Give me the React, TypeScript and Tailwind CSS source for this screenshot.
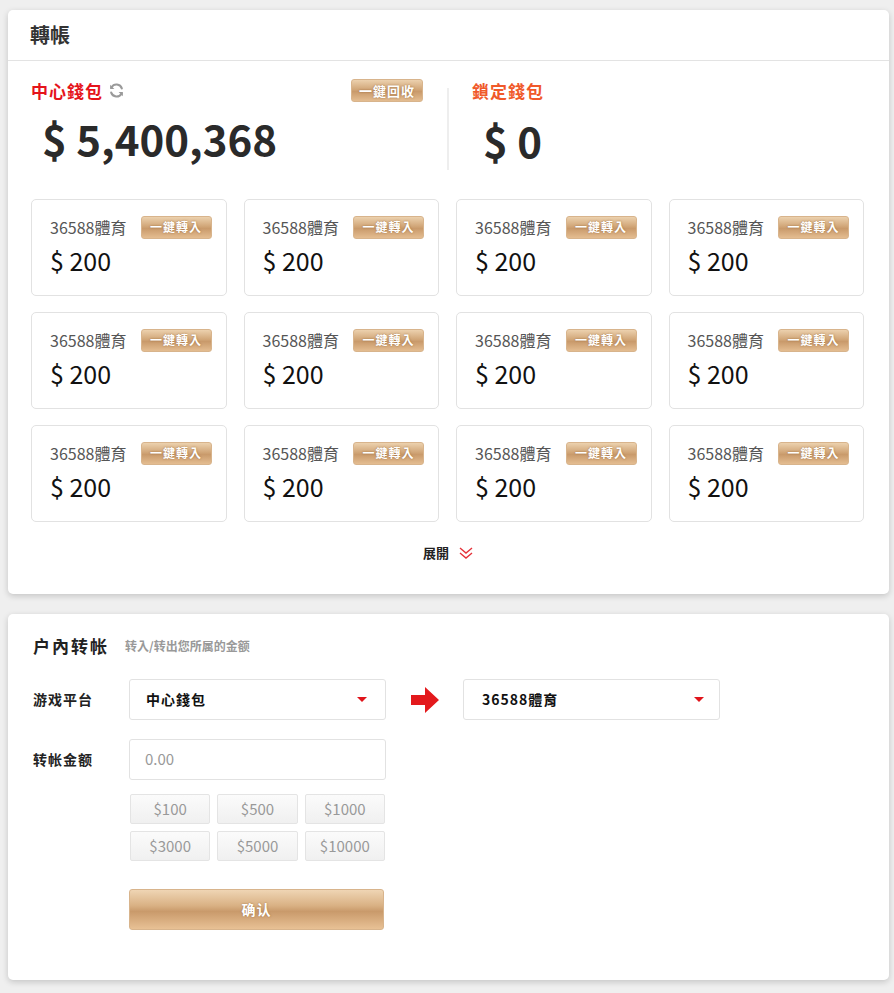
import React from "react";

const FONT = { fontFamily: '"Noto Sans CJK TC", "Noto Sans CJK SC", "Noto Sans", sans-serif' };

const goldBtn =
  "bg-[linear-gradient(to_bottom,#ecd1ae_0%,#d1a678_45%,#c99a6b_55%,#e4bd91_100%)] border border-[#d8b48c] text-white font-bold [text-shadow:0_0_2px_rgba(120,70,20,0.6)]";

function Card() {
  return (
    <div className="h-[97px] rounded-[5px] border border-[#e2e2e2] bg-white pl-[18px] pr-[14px] pt-[15px]">
      <div className="flex items-center justify-between">
        <span className="text-[16px] text-[#555] leading-[24px]">36588體育</span>
        <span className={`${goldBtn} flex h-[23px] w-[71px] items-center justify-center rounded-[3px] text-[12px] tracking-[1px]`}>
          一鍵轉入
        </span>
      </div>
      <div className="mt-[5px] text-[25px] leading-[32px] text-[#111]">$ 200</div>
    </div>
  );
}

function Caret() {
  return (
    <svg width="10" height="6" viewBox="0 0 10 6">
      <polygon points="0,0 10,0 5,5" fill="#e0141b" />
    </svg>
  );
}

export default function App() {
  const amounts = ["$100", "$500", "$1000", "$3000", "$5000", "$10000"];
  return (
    <div className="min-h-[993px] w-full bg-[#efefef] pt-[10px] pl-[8px] pr-[5px]" style={FONT}>
      {/* Panel 1 */}
      <div className="w-[881px] rounded-[5px] bg-white shadow-[0_2px_6px_rgba(0,0,0,0.18)]">
        <div className="flex h-[51px] items-center border-b border-[#e3e3e3] pl-[22px]">
          <span className="text-[20px] font-bold text-[#333]">轉帳</span>
        </div>
        <div className="px-[23px] pt-[17px] pb-[10px]">
          <div className="flex">
            <div className="w-[392px]">
              <div className="flex items-center justify-between">
                <div className="flex items-center">
                  <span className="text-[17px] font-bold tracking-[1px] text-[#e5141b]">中心錢包</span>
                  <svg className="ml-[5px]" width="17" height="17" viewBox="0 0 24 24" fill="none" stroke="#9a9a9a" strokeWidth="3" strokeLinecap="round">
                    <path d="M19.5 9A8 8 0 0 0 5 7.5" />
                    <path d="M4.5 15A8 8 0 0 0 19 16.5" />
                    <polygon points="3,4 3,10 9,10" fill="#9a9a9a" stroke="none" />
                    <polygon points="21,20 21,14 15,14" fill="#9a9a9a" stroke="none" />
                  </svg>
                </div>
                <span className={`${goldBtn} flex h-[23px] w-[72px] items-center justify-center rounded-[3px] text-[13px] tracking-[1px]`}>
                  一鍵回收
                </span>
              </div>
              <div className="mt-[6px] pl-[11px] text-[42px] font-bold leading-[56px] text-[#2a2a2a]">$ 5,400,368</div>
            </div>
            <div className="ml-[24px] mt-[10px] h-[82px] w-[2px] bg-[#eeeeee]" />
            <div className="pl-[23px] pt-[2px]">
              <div className="text-[17px] font-bold tracking-[1px] text-[#f0592a] leading-[22px]">鎖定錢包</div>
              <div className="mt-[10px] pl-[11px] text-[42px] font-bold leading-[56px] text-[#2a2a2a]">$ 0</div>
            </div>
          </div>
          <div className="mt-[29px] grid grid-cols-4 gap-x-[17px] gap-y-[16px] pr-[2px]">
            {Array.from({ length: 12 }).map((_, i) => (
              <Card key={i} />
            ))}
          </div>
          <div className="flex h-[62px] items-center justify-center">
            <span className="text-[13px] font-bold text-[#222]">展開</span>
            <svg className="ml-[9px]" width="16" height="14" viewBox="0 0 16 14" fill="none" stroke="#e5323a" strokeWidth="1.4">
              <polyline points="2,2 8,7 14,2" />
              <polyline points="2,7 8,12 14,7" />
            </svg>
          </div>
        </div>
      </div>

      {/* Panel 2 */}
      <div className="mt-[20px] h-[366px] w-[881px] rounded-[5px] bg-white shadow-[0_2px_6px_rgba(0,0,0,0.18)] pl-[25px] pt-[20px]">
        <div className="flex items-center h-[24px]">
          <span className="text-[17px] font-bold tracking-[2px] text-[#222]">户內转帐</span>
          <span className="ml-[16px] text-[12px] font-bold text-[#999]">转入/转出您所属的金额</span>
        </div>
        <div className="mt-[21px] flex items-center">
          <span className="w-[96px] text-[14px] font-bold tracking-[1px] text-[#222]">游戏平台</span>
          <div className="flex h-[41px] w-[257px] items-center justify-between rounded-[3px] border border-[#e2e2e2] pl-[16px] pr-[18px]">
            <span className="text-[14px] font-bold tracking-[1px] text-[#111]">中心錢包</span>
            <Caret />
          </div>
          <svg className="ml-[25px]" width="28" height="26" viewBox="0 0 28 26">
            <polygon points="0,8 14,8 14,0 28,13 14,26 14,18 0,18" fill="#e3191c" />
          </svg>
          <div className="ml-[24px] flex h-[41px] w-[257px] items-center justify-between rounded-[3px] border border-[#e2e2e2] pl-[18px] pr-[15px]">
            <span className="text-[14px] font-bold tracking-[1px] text-[#111]">36588體育</span>
            <Caret />
          </div>
        </div>
        <div className="mt-[19px] flex items-center">
          <span className="w-[96px] text-[14px] font-bold tracking-[1px] text-[#222]">转帐金额</span>
          <div className="flex h-[41px] w-[257px] items-center rounded-[3px] border border-[#e2e2e2] pl-[15px]">
            <span className="text-[15px] text-[#999]">0.00</span>
          </div>
        </div>
        <div className="ml-[97px] mt-[14px] grid w-[255px] grid-cols-3 gap-x-[7px] gap-y-[7px]">
          {amounts.map((a) => (
            <div
              key={a}
              className="flex h-[30px] items-center justify-center rounded-[2px] border border-[#e4e4e4] bg-[linear-gradient(to_bottom,#fbfbfb,#f0f0f0)] text-[15px] text-[#999]"
            >
              {a}
            </div>
          ))}
        </div>
        <div className={`${goldBtn} ml-[96px] mt-[28px] flex h-[41px] w-[255px] items-center justify-center rounded-[3px] text-[14px] tracking-[1px] bg-[linear-gradient(to_bottom,#efd5b4_0%,#d9b184_40%,#c99a6b_55%,#e8c195_100%)]`}>
          确认
        </div>
      </div>
    </div>
  );
}
